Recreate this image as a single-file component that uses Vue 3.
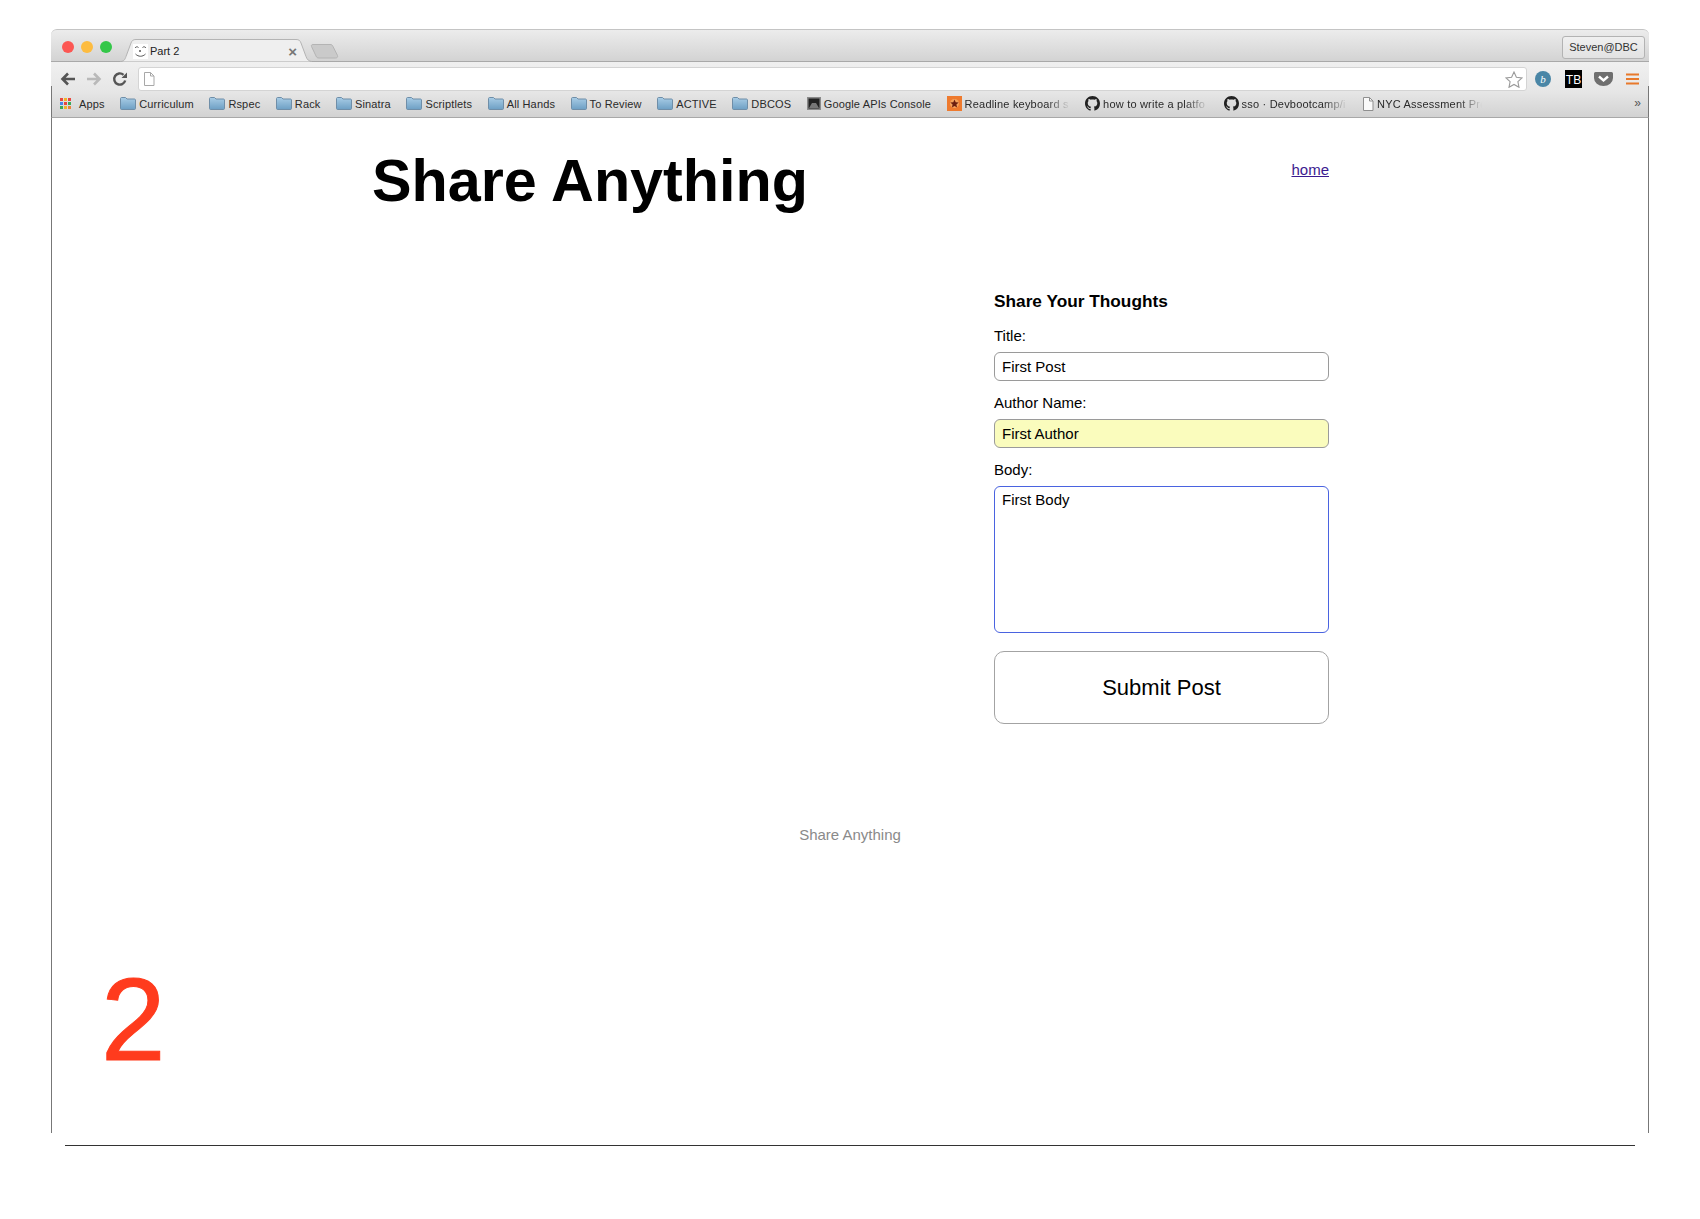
<script setup>
const githubPath = 'M8 0C3.58 0 0 3.58 0 8c0 3.54 2.29 6.53 5.47 7.59.4.07.55-.17.55-.38 0-.19-.01-.82-.01-1.49-2.01.37-2.53-.49-2.69-.94-.09-.23-.48-.94-.82-1.13-.28-.15-.68-.52-.01-.53.63-.01 1.08.58 1.23.82.72 1.21 1.87.87 2.33.66.07-.52.28-.87.51-1.07-1.78-.2-3.64-.89-3.64-3.95 0-.87.31-1.59.82-2.15-.08-.2-.36-1.02.08-2.12 0 0 .67-.21 2.2.82.64-.18 1.32-.27 2-.27.68 0 1.36.09 2 .27 1.53-1.04 2.2-.82 2.2-.82.44 1.1.16 1.92.08 2.12.51.56.82 1.27.82 2.15 0 3.07-1.87 3.75-3.65 3.95.29.25.54.73.54 1.48 0 1.07-.01 1.93-.01 2.2 0 .21.15.46.55.38A8.013 8.013 0 0016 8c0-4.42-3.58-8-8-8z'

const bookmarks = [
  { label: 'Curriculum', icon: 'folder' },
  { label: 'Rspec', icon: 'folder' },
  { label: 'Rack', icon: 'folder' },
  { label: 'Sinatra', icon: 'folder' },
  { label: 'Scriptlets', icon: 'folder' },
  { label: 'All Hands', icon: 'folder' },
  { label: 'To Review', icon: 'folder' },
  { label: 'ACTIVE', icon: 'folder' },
  { label: 'DBCOS', icon: 'folder' },
  { label: 'Google APIs Console', icon: 'google' },
  { label: 'Readline keyboard s', icon: 'readline', cut: true },
  { label: 'how to write a platfo', icon: 'github', cut: true },
  { label: 'sso · Devbootcamp/i', icon: 'github', cut: true },
  { label: 'NYC Assessment Pro', icon: 'page', cut: true }
]

const appDots = ['#e8483f', '#f0b429', '#e8483f', '#4a86e8', '#e8483f', '#3aa757', '#3aa757', '#f0b429', '#e8833a']
</script>

<template>
  <div class="page">
    <div class="window">
      <div class="titlebar">
        <div class="lights">
          <span class="light red"></span>
          <span class="light amber"></span>
          <span class="light green"></span>
        </div>
        <div class="tab">
          <svg class="tab-shape" width="192" height="23" viewBox="0 0 192 23">
            <path d="M0 22.500c4 0 5-2 6-5L11 4c1-2.500 2-3.500 5-3.500h160c3 0 4 1 5 3.500l5 13.500c1 3 3 5 6 5" fill="#efefef" stroke="#b4b4b4" />
          </svg>
          <svg class="tab-favicon" width="15" height="15" viewBox="0 0 15 15">
            <rect width="15" height="15" fill="#fff" />
            <path d="M2 4c1-1.500 2.500-1.500 3.500-.5M9.500 3.500c1-1 2.500-1 3.500.5M2.500 10c3 3 7 3 10 0" fill="none" stroke="#555" stroke-width="1" />
            <circle cx="7" cy="7" r="1" fill="#555" />
          </svg>
          <span class="tab-title">Part 2</span>
          <span class="tab-close">×</span>
        </div>
        <svg class="newtab" width="30" height="16" viewBox="0 0 30 16">
          <path d="M3 1.500h17c1.500 0 2.500 .5 3 2l4.500 9c.5 1.500-.5 2.500-2 2.500H9c-1.500 0-2.500-.5-3-2L1.500 3.500C1 2.500 1.500 1.500 3 1.500z" fill="#cacaca" stroke="#b4b4b4" />
        </svg>
        <span class="profile">Steven@DBC</span>
      </div>

      <div class="toolbar">
        <div class="nav">
          <svg width="16" height="14" viewBox="0 0 16 14"><path d="M15 7H3M8 1.500 2.500 7 8 12.500" fill="none" stroke="#555" stroke-width="2.600" /></svg>
          <svg width="16" height="14" viewBox="0 0 16 14"><path d="M1 7h12M8 1.500 13.500 7 8 12.500" fill="none" stroke="#b9b9b9" stroke-width="2.600" /></svg>
          <svg width="16" height="16" viewBox="0 0 16 16"><path d="M13.200 9.500A5.600 5.600 0 1 1 11.500 3.800" fill="none" stroke="#555" stroke-width="2.400" /><path d="M9.500 7 15 7 15 1.500z" fill="#555" /></svg>
        </div>
        <div class="omnibox">
          <svg width="12" height="14" viewBox="0 0 12 14"><path d="M1.500.5h6l3.500 3.500v9.500h-9.500z" fill="#fff" stroke="#a8a8a8" /><path d="M7.500.5V4H11" fill="none" stroke="#a8a8a8" /></svg>
          <svg class="star" width="18" height="17" viewBox="0 0 18 17"><path d="M9 1l2.400 5.200 5.600.7-4.100 3.800 1.100 5.600L9 13.500l-5 2.800 1.100-5.600L1 6.900l5.600-.7z" fill="#fff" stroke="#9a9a9a" stroke-width="1.100" /></svg>
        </div>
        <div class="extensions">
          <span class="ext-b">b</span>
          <span class="ext-tb">TB</span>
          <svg width="19" height="14" viewBox="0 0 19 14"><path d="M1.500 0h16A1.500 1.500 0 0 1 19 1.500V6A9.500 8 0 0 1 0 6V1.500A1.500 1.500 0 0 1 1.500 0z" fill="#6f6f6f" /><path d="M5 4.500 9.500 8.500 14 4.500" fill="none" stroke="#fff" stroke-width="2.400" /></svg>
          <svg class="ext-menu" width="13" height="12" viewBox="0 0 13 12"><path d="M0 1.500h13M0 6h13M0 10.500h13" stroke="#e8792b" stroke-width="2.200" /></svg>
        </div>
      </div>

      <div class="bookmarks">
        <div class="bm bm-apps">
          <span class="apps"><i v-for="(c, n) in appDots" :key="n" :style="{ background: c }"></i></span>
          <span class="bm-text">Apps</span>
        </div>
        <div v-for="b in bookmarks" :key="b.label" class="bm">
          <svg v-if="b.icon === 'folder'" width="16" height="13" viewBox="0 0 16 13">
            <defs>
              <linearGradient id="fold" x1="0" y1="0" x2="0" y2="1">
                <stop offset="0" stop-color="#a9cde6" />
                <stop offset="1" stop-color="#6d9fc4" />
              </linearGradient>
            </defs>
            <path d="M.5 1.500C.5 1 1 .5 1.500.5h4l1.500 1.500h7.500c.5 0 1 .5 1 1v8.500c0 .5-.5 1-1 1h-13c-.5 0-1-.5-1-1z" fill="url(#fold)" stroke="#6f8ea8" />
          </svg>
          <svg v-else-if="b.icon === 'google'" width="14" height="13" viewBox="0 0 14 13">
            <rect width="14" height="13" fill="#8a8a8a" />
            <rect x="1.500" y="1.500" width="11" height="10" fill="#222" />
            <path d="M2 11l3-5h4l3 5z" fill="#777" />
          </svg>
          <svg v-else-if="b.icon === 'readline'" width="15" height="15" viewBox="0 0 15 15">
            <rect width="15" height="15" fill="#ee7a2e" />
            <circle cx="7.500" cy="7.500" r="4.500" fill="#f4a25c" />
            <path d="M7.500 3.500l1.200 2.800 3 .3-2.300 2 .7 3-2.600-1.600-2.600 1.600.7-3-2.300-2 3-.3z" fill="#6b1f10" />
          </svg>
          <svg v-else-if="b.icon === 'github'" width="15" height="15" viewBox="0 0 16 16">
            <path :d="githubPath" fill="#222" />
          </svg>
          <svg v-else width="12" height="14" viewBox="0 0 12 14">
            <path d="M1.500.5h6l3.500 3.500v9.500h-9.500z" fill="#fafafa" stroke="#8f8f8f" />
            <path d="M7.500.5V4H11" fill="none" stroke="#8f8f8f" />
          </svg>
          <span class="bm-text" :class="{ cut: b.cut }">{{ b.label }}</span>
        </div>
        <span class="more">»</span>
      </div>

      <div class="content">
        <div class="container">
          <header class="header">
            <h1>Share Anything</h1>
            <a class="home" href="#">home</a>
          </header>
          <form class="share" @submit.prevent>
            <h3>Share Your Thoughts</h3>
            <div class="field">
              <label>Title:</label>
              <input value="First Post" />
            </div>
            <div class="field">
              <label>Author Name:</label>
              <input class="autofill" value="First Author" />
            </div>
            <div class="field">
              <label>Body:</label>
              <textarea class="focused">First Body</textarea>
            </div>
            <button type="button">Submit Post</button>
          </form>
        </div>
        <footer class="footer">Share Anything</footer>
        <div class="number">2</div>
      </div>
    </div>
    <div class="rule"></div>
  </div>
</template>

<style>
html, body {
  margin: 0;
  background: #fff;
}
</style>

<style scoped>
.page {
  width: 1700px;
  height: 1219px;
  padding-top: 29px;
  box-sizing: border-box;
  font-family: "Liberation Sans", Arial, sans-serif;
  color: #000;
  overflow: hidden;
}
.window {
  width: 1598px;
  margin-left: 51px;
  height: 1104px;
  display: flex;
  flex-direction: column;
}
.titlebar {
  height: 33px;
  box-sizing: border-box;
  display: flex;
  align-items: flex-end;
  position: relative;
  background: linear-gradient(#ececec, #d3d3d3);
  border-top: 1px solid #c4c4c4;
  border-bottom: 1px solid #a9a9a9;
  border-radius: 6px 6px 0 0;
}
.lights {
  display: flex;
  gap: 7px;
  align-self: flex-start;
  margin: 11px 0 0 11px;
}
.light {
  width: 12px;
  height: 12px;
  border-radius: 50%;
}
.red { background: #fc5753; }
.amber { background: #fdbc40; }
.green { background: #33c748; }
.tab {
  width: 192px;
  height: 23px;
  margin: 0 0 -1px 8px;
  position: relative;
  display: flex;
  align-items: center;
  padding: 1px 15px 0 13px;
  box-sizing: border-box;
  font-size: 11px;
}
.tab-shape {
  position: absolute;
  left: 0;
  top: 0;
}
.tab-favicon {
  position: relative;
  margin-right: 2px;
}
.tab-title {
  position: relative;
  flex: 1;
  color: #222;
}
.tab-close {
  position: relative;
  color: #777;
  font-size: 15px;
  font-weight: bold;
  line-height: 1;
}
.newtab {
  margin: 0 0 2px -2px;
}
.profile {
  margin-left: auto;
  margin-right: 4px;
  align-self: flex-start;
  margin-top: 6px;
  height: 23px;
  line-height: 21px;
  width: 83px;
  box-sizing: border-box;
  text-align: center;
  font-size: 11px;
  color: #333;
  border: 1px solid #b3b3b3;
  border-radius: 3px;
  background: linear-gradient(#f0f0f0, #e2e2e2);
}
.toolbar {
  height: 30px;
  box-sizing: border-box;
  display: flex;
  align-items: center;
  position: relative;
  background: linear-gradient(#f0f0f0, #e6e6e6);
  padding-top: 4px;
}
.toolbar::before,
.toolbar::after {
  content: "";
  position: absolute;
  top: 24px;
  width: 1px;
  height: 6px;
  background: #777;
}
.toolbar::before { left: 0; }
.toolbar::after { right: 0; }
.nav {
  width: 87px;
  display: flex;
  align-items: center;
  gap: 10px;
  padding-left: 9px;
  box-sizing: border-box;
}
.omnibox {
  width: 1389px;
  height: 24px;
  box-sizing: border-box;
  background: #fff;
  border: 1px solid #d4d4d4;
  border-radius: 3px;
  display: flex;
  align-items: center;
  justify-content: space-between;
  padding: 0 3px 0 4px;
}
.extensions {
  display: flex;
  align-items: center;
  gap: 12px;
  padding-left: 8px;
}
.ext-b {
  width: 16px;
  height: 16px;
  border-radius: 50%;
  background: #4a86a6;
  color: #fff;
  font: italic 11px/16px "Liberation Serif", serif;
  text-align: center;
}
.ext-tb {
  width: 17px;
  height: 18px;
  margin-left: 2px;
  background: #000;
  color: #fff;
  font-size: 12px;
  line-height: 20px;
  text-align: center;
  overflow: hidden;
}
.ext-menu {
  margin-left: 1px;
}
.bookmarks {
  height: 26px;
  box-sizing: border-box;
  display: flex;
  align-items: center;
  gap: 15.5px;
  padding: 0 0 2px 8px;
  background: linear-gradient(#e6e6e6, #d2d2d2);
  border-bottom: 1px solid #a8a8a8;
  border-left: 1px solid #777;
  border-right: 1px solid #777;
  position: relative;
}
.bm {
  display: flex;
  align-items: center;
  gap: 3px;
  flex: none;
}
.bm-apps {
  gap: 7px;
}
.apps {
  width: 12px;
  height: 12px;
  display: grid;
  grid-template-columns: repeat(3, 3px);
  grid-auto-rows: 3px;
  gap: 1px;
}
.apps i {
  display: block;
}
.bm-text {
  font-size: 11px;
  letter-spacing: 0.15px;
  color: #2a2a2a;
  white-space: nowrap;
}
.bm-text.cut {
  width: 105px;
  letter-spacing: 0.2px;
  -webkit-mask-image: linear-gradient(to right, #000 78%, transparent 100%);
  mask-image: linear-gradient(to right, #000 78%, transparent 100%);
}
.more {
  position: absolute;
  right: 7px;
  top: 4px;
  font-size: 12px;
  color: #555;
}
.content {
  flex: 1;
  border-left: 1px solid #777;
  border-right: 1px solid #777;
  display: flex;
  flex-direction: column;
  min-height: 0;
}
.container {
  width: 957px;
  margin-left: 320px;
  padding-top: 29px;
}
.header {
  display: flex;
  justify-content: space-between;
  align-items: flex-start;
  height: 143px;
}
h1 {
  margin: 0;
  font-size: 59.3px;
  line-height: 68px;
  font-weight: bold;
}
.home {
  font-size: 15px;
  line-height: 18px;
  margin-top: 14px;
  color: #3b1a8f;
}
.share {
  width: 335px;
  margin-left: auto;
  display: flex;
  flex-direction: column;
  gap: 13px;
}
h3 {
  margin: 0 0 2px;
  font-size: 17.25px;
  line-height: 22px;
  font-weight: bold;
}
.field {
  display: flex;
  flex-direction: column;
  gap: 7px;
}
label {
  font-size: 15px;
  line-height: 18px;
}
input, textarea {
  font-family: inherit;
  font-size: 15px;
  color: #000;
  width: 100%;
  box-sizing: border-box;
  border: 1px solid #9a9a9a;
  border-radius: 6px;
  background: #fff;
  padding: 0 7px;
  margin: 0;
  outline: none;
  display: block;
}
input {
  height: 29px;
}
.autofill {
  background: #fafcbd;
}
textarea {
  height: 147px;
  padding-top: 4px;
  resize: none;
  line-height: 17px;
}
.focused {
  border-color: #4a63e0;
}
button {
  margin-top: 5px;
  height: 73px;
  font-family: inherit;
  font-size: 22px;
  color: #000;
  background: #fff;
  border: 1px solid #a3a3a3;
  border-radius: 10px;
}
.footer {
  margin-top: 101px;
  text-align: center;
  font-size: 15px;
  line-height: 20px;
  color: #8a8a8a;
}
.number {
  margin: 118px 0 0 49px;
  font-size: 116px;
  line-height: 115px;
  color: #ff3b1d;
  -webkit-text-stroke: 1px #ff3b1d;
}
.rule {
  margin: 12px 0 0 65px;
  width: 1570px;
  height: 1px;
  background: #333;
}
</style>
